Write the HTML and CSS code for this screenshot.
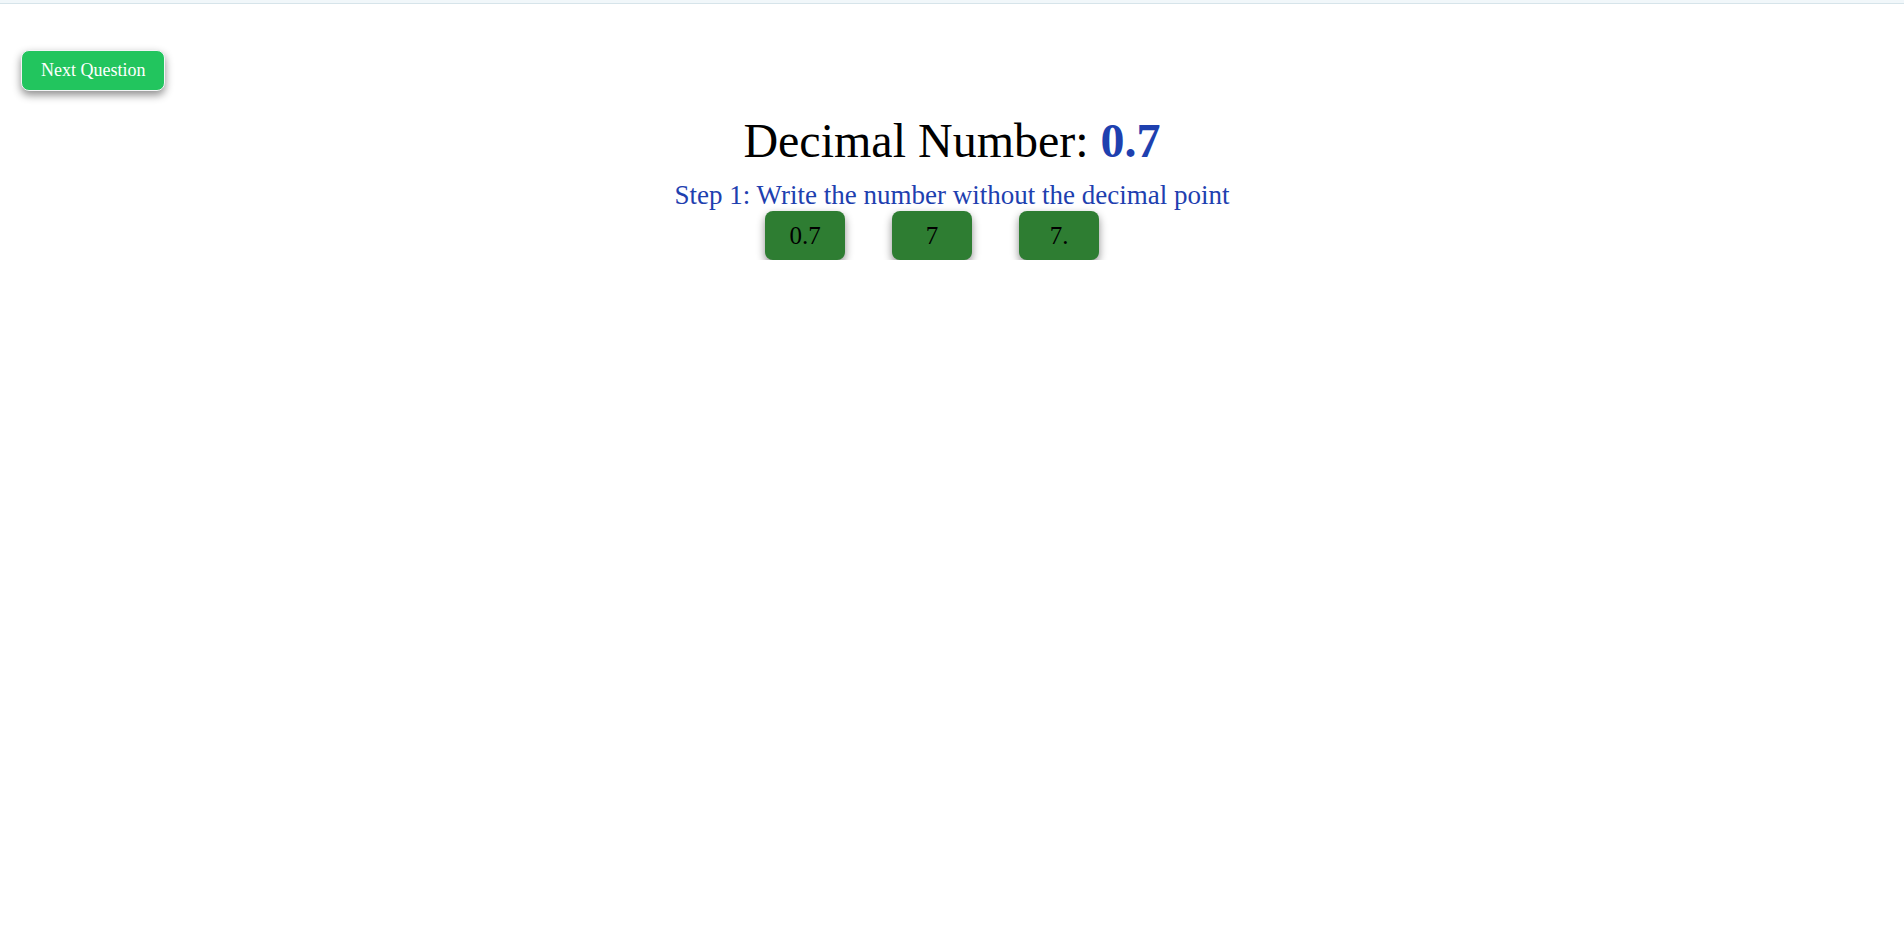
FILE: index.html
```html
<!DOCTYPE html>
<html lang="en">
<head>
<meta charset="utf-8">
<title>Decimal Number</title>
<link rel="stylesheet" href="styles.css">
</head>
<body>
<div class="topbar"></div>
<main class="main">
  <div class="toolbar">
    <button class="next-btn">Next Question</button>
  </div>
  <h1 class="title">Decimal Number: <span class="value">0.7</span></h1>
  <p class="step">Step 1: Write the number without the decimal point</p>
  <div class="choices">
    <button class="choice">0.7</button>
    <button class="choice">7</button>
    <button class="choice">7.</button>
  </div>
</main>
</body>
</html>
```
FILE: styles.css
```css
html, body {
  margin: 0;
  padding: 0;
  background: #ffffff;
  font-family: "Liberation Serif", "Times New Roman", serif;
}

.topbar {
  height: 3px;
  background: #f1f7fa;
  border-bottom: 1px solid #d6e4ea;
}

.main {
  padding: 46px 21px 0 21px;
}

.toolbar {
  display: flex;
}

.next-btn {
  font-family: "Liberation Serif", "Times New Roman", serif;
  font-size: 18px;
  line-height: normal;
  color: #ffffff;
  background: #22c55e;
  border: 1px solid #f3f4f6;
  border-radius: 8px;
  padding: 9px 19px;
  box-shadow: 0 4px 8px rgba(0, 0, 0, 0.45);
  cursor: pointer;
}

.title {
  margin: 22px 0 12px 0;
  text-align: center;
  font-size: 48px;
  font-weight: normal;
  line-height: normal;
  color: #000000;
}

.value {
  font-weight: bold;
  color: #1e40af;
}

.step {
  margin: 0;
  text-align: center;
  font-size: 27px;
  line-height: normal;
  color: #1e40af;
}

.choices {
  display: flex;
  justify-content: center;
  gap: 47px;
  padding-right: 40px;
  margin-right: -21px;
  margin-left: -21px;
}

.choice {
  width: 80px;
  height: 49px;
  font-family: "Liberation Serif", "Times New Roman", serif;
  font-size: 25px;
  color: #000000;
  background: #2e7d32;
  border: none;
  border-radius: 8px;
  box-shadow: 0 4px 8px rgba(0, 0, 0, 0.45);
  cursor: pointer;
  padding: 0;
}
```
